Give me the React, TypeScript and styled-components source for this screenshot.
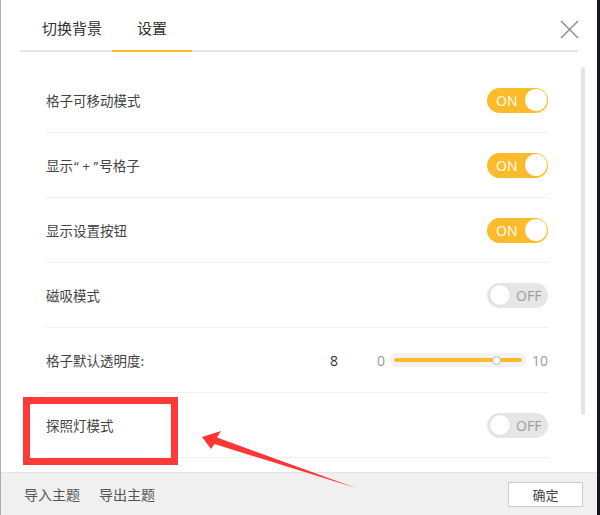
import React from "react";
import styled, { createGlobalStyle } from "styled-components";

const GlobalStyle = createGlobalStyle`
  html, body { margin: 0; padding: 0; height: 515px; overflow: hidden; background: #0e1b26; }
  * { box-sizing: border-box; }
`;

const CJK = `"Noto Sans CJK SC", "Noto Sans", sans-serif`;
const LATIN = `"Open Sans", "Noto Sans", sans-serif`;
const YELLOW = "#fcbb2a";

const Window = styled.div`
  position: relative;
  width: 597px;
  height: 515px;
  background: #ffffff;
  border-left: 1px solid #ababab;
  display: flex;
  flex-direction: column;
  font-family: ${CJK};
`;

const Header = styled.div`
  height: 52px;
  margin: 0 19px 0 19px;
  display: flex;
  align-items: stretch;
  border-bottom: 2px solid #e6e6e6;
  padding-left: 12px;
`;

const Tab = styled.div<{ $active?: boolean }>`
  width: 80px;
  display: flex;
  align-items: center;
  justify-content: center;
  padding-top: 4px;
  margin-bottom: -2px;
  font-size: 15px;
  color: #333;
  border-bottom: 2px solid ${(p) => (p.$active ? YELLOW : "transparent")};
`;

const Close = styled.div`
  margin-left: auto;
  margin-right: -1px;
  margin-top: 20px;
  width: 19px;
  height: 19px;
  display: flex;
`;

const Body = styled.div`
  flex: 1;
  display: flex;
  overflow: hidden;
`;

const List = styled.div`
  margin-left: 45px;
  width: 502px;
  padding-top: 16px;
  display: flex;
  flex-direction: column;
`;

const Row = styled.div`
  height: 65px;
  flex: none;
  border-bottom: 1px solid #efefef;
  display: flex;
  align-items: center;
  justify-content: space-between;
`;

const Label = styled.span`
  font-size: 13.5px;
  color: #444;
`;

const Quote = styled.span`
  font-family: ${LATIN};
  padding: 0 1px;
`;

const ScrollTrack = styled.div`
  margin-left: 33px;
  width: 4px;
  display: flex;
  flex-direction: column;
`;

const ScrollThumb = styled.div`
  margin-top: 15px;
  height: 348px;
  background: #e4e4e4;
  border-radius: 2px;
`;

const Toggle = styled.div<{ $on: boolean }>`
  width: 61px;
  height: 25px;
  border-radius: 13px;
  background: ${(p) => (p.$on ? YELLOW : "#e6e6e6")};
  display: flex;
  flex-direction: ${(p) => (p.$on ? "row" : "row-reverse")};
  align-items: center;
  padding: 0 1px 0 1.5px;
`;

const ToggleText = styled.span<{ $on: boolean }>`
  flex: 1;
  text-align: center;
  font-family: ${LATIN};
  font-size: 14px;
  color: ${(p) => (p.$on ? "#ffffff" : "#9c9c9c")};
`;

const Knob = styled.span<{ $on: boolean }>`
  width: 22px;
  height: 22px;
  border-radius: 50%;
  background: #fff;
  border: ${(p) => (p.$on ? "none" : "1px solid #dcdcdc")};
`;

const SliderGroup = styled.div`
  display: flex;
  align-items: center;
  font-family: ${LATIN};
  font-size: 14px;
`;

const Value = styled.span`
  color: #333;
  margin-right: 39px;
`;

const Bound = styled.span`
  color: #9a9a9a;
`;

const Track = styled.div`
  position: relative;
  margin: 0 6px 0 5px;
  width: 136px;
  height: 14px;
  border-radius: 7px;
  background: #f2f2f2;
  padding: 0 4px;
  display: flex;
  align-items: center;
`;

const Fill = styled.div`
  flex: 1;
  height: 4px;
  border-radius: 2px;
  background: ${YELLOW};
`;

const Thumb = styled.span`
  position: absolute;
  top: 2.5px;
  width: 9px;
  height: 9px;
  border-radius: 50%;
  background: #fff;
  border: 1px solid #bbb;
`;

const Footer = styled.div`
  height: 43px;
  flex: none;
  background: #f0f0f0;
  border-top: 1px solid #e3e3e3;
  display: flex;
  align-items: center;
  padding: 0 14px 0 23px;
  gap: 19px;
`;

const FooterLink = styled.span`
  font-size: 14px;
  color: #555;
`;

const OkButton = styled.button`
  margin-left: auto;
  width: 75px;
  height: 25px;
  background: #fff;
  border: 1px solid #cdcdcd;
  font-family: ${CJK};
  font-size: 13px;
  color: #444;
  padding: 0;
`;

const Highlight = styled.div`
  position: absolute;
  left: 22px;
  top: 397px;
  width: 155px;
  height: 68px;
  border: 7px solid #ff3838;
  pointer-events: none;
`;

const ArrowLayer = styled.svg`
  position: absolute;
  left: -1px;
  top: 0;
  pointer-events: none;
`;

function Switch({ on }: { on: boolean }) {
  return (
    <Toggle $on={on}>
      <ToggleText $on={on}>{on ? "ON" : "OFF"}</ToggleText>
      <Knob $on={on} />
    </Toggle>
  );
}

const toggles: { key: string; label: React.ReactNode; on: boolean }[] = [
  { key: "move", label: "格子可移动模式", on: true },
  {
    key: "plus",
    label: (
      <>
        显示<Quote>“ + ”</Quote>号格子
      </>
    ),
    on: true,
  },
  { key: "btn", label: "显示设置按钮", on: true },
  { key: "mag", label: "磁吸模式", on: false },
];

export default function App() {
  const value = 8;
  const pct = value / 10;
  return (
    <>
      <GlobalStyle />
      <Window>
        <Header>
          <Tab>切换背景</Tab>
          <Tab $active>设置</Tab>
          <Close>
            <svg width="19" height="19" viewBox="0 0 19 19">
              <path d="M1 1 L18 18 M18 1 L1 18" stroke="#8a8a8a" strokeWidth="1.4" fill="none" />
            </svg>
          </Close>
        </Header>
        <Body>
          <List>
            {toggles.map((t) => (
              <Row key={t.key}>
                <Label>{t.label}</Label>
                <Switch on={t.on} />
              </Row>
            ))}
            <Row>
              <Label>格子默认透明度:</Label>
              <SliderGroup>
                <Value>{value}</Value>
                <Bound>0</Bound>
                <Track>
                  <Fill />
                  <Thumb style={{ left: `${4 + pct * 128 - 4.5}px` }} />
                </Track>
                <Bound>10</Bound>
              </SliderGroup>
            </Row>
            <Row>
              <Label>探照灯模式</Label>
              <Switch on={false} />
            </Row>
          </List>
          <ScrollTrack>
            <ScrollThumb />
          </ScrollTrack>
        </Body>
        <Footer>
          <FooterLink>导入主题</FooterLink>
          <FooterLink>导出主题</FooterLink>
          <OkButton>确定</OkButton>
        </Footer>
        <Highlight />
        <ArrowLayer width="600" height="515" viewBox="0 0 600 515">
          <polygon
            points="202,437 221,431 217,437.5 356,488 214.5,444 211,449"
            fill="#ff3636"
          />
        </ArrowLayer>
      </Window>
    </>
  );
}
